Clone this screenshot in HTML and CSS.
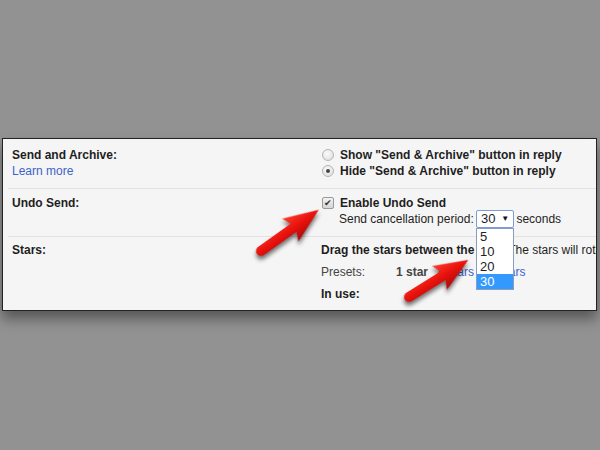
FILE: index.html
```html
<!DOCTYPE html>
<html lang="en">

<head>
    <meta charset="UTF-8">
    <title>General settings - Undo Send</title>
    <link rel="stylesheet" href="styles.css">
</head>

<body>
    <div class="panel">
        <!-- Send and Archive -->
        <div class="row row-archive">
            <div class="label">
                <p><strong>Send and Archive:</strong></p>
                <p><a class="link" href="#">Learn more</a></p>
            </div>
            <div class="value">
                <p class="option"><span class="radio"></span><strong>Show "Send &amp; Archive" button in reply</strong></p>
                <p class="option"><span class="radio on"></span><strong>Hide "Send &amp; Archive" button in reply</strong></p>
            </div>
        </div>

        <!-- Undo Send -->
        <div class="row row-undo">
            <div class="label">
                <p><strong>Undo Send:</strong></p>
            </div>
            <div class="value">
                <p class="option"><span class="check">&#10004;</span><strong>Enable Undo Send</strong></p>
                <p class="period">
                    Send cancellation period:
                    <span class="select">
                        <span class="select-value">30</span><span class="select-arrow">&#9660;</span>
                        <span class="dropdown">
                            <span class="item">5</span>
                            <span class="item">10</span>
                            <span class="item">20</span>
                            <span class="item selected">30</span>
                        </span>
                    </span>
                    seconds
                </p>
            </div>
        </div>

        <!-- Stars -->
        <div class="row row-stars">
            <div class="label">
                <p><strong>Stars:</strong></p>
            </div>
            <div class="value">
                <p class="stars-line"><strong>Drag the stars between the lists.</strong> The stars will rotate in the order shown below when you click successively.</p>
                <p class="stars-line presets">
                    <span class="presets-label">Presets:</span>
                    <strong>1 star</strong>
                    <a class="link" href="#">4 stars</a>
                    <a class="link" href="#">all stars</a>
                </p>
                <p class="stars-line"><strong>In use:</strong></p>
            </div>
        </div>
    </div>

    <!-- setas vermelhas por cima da captura -->
    <svg class="arrows" width="600" height="450" viewBox="0 0 600 450">
        <defs>
            <linearGradient id="red" x1="0" y1="-14" x2="0" y2="14" gradientUnits="userSpaceOnUse">
                <stop offset="0" stop-color="#ff3b2b" />
                <stop offset="0.5" stop-color="#e8120c" />
                <stop offset="1" stop-color="#b0070a" />
            </linearGradient>
        </defs>
        <path class="arrow" transform="translate(261 251) rotate(-35.5)"
            d="M0,-5 L40,-5 L36,-14 L71,0 L36,14 L40,5 L0,5 A5,5 0 0 1 0,-5 Z" />
        <path class="arrow" transform="translate(409 297) rotate(-32)"
            d="M0,-5 L40,-5 L36,-14 L70,0 L36,14 L40,5 L0,5 A5,5 0 0 1 0,-5 Z" />
    </svg>
</body>

</html>
```

FILE: styles.css
```css
body {
    margin: 0;
    background-color: #929292;
    font-family: Arial, "Liberation Sans", sans-serif;
    font-size: 12px;
    color: #1e1e1e;
    position: relative;
    height: 450px;
    overflow: hidden;
}

p {
    margin: 0;
    line-height: 16px;
    white-space: nowrap;
}

.panel {
    margin: 138px 3px 0 2px;
    background-color: #f5f5f5;
    border: 1px solid #222;
    box-shadow: 0 8px 12px rgba(0, 0, 0, 0.4);
    overflow: hidden;
}

.row {
    display: grid;
    grid-template-columns: 313px 1fr;
    margin-left: 5px;
    border-bottom: 1px solid #e2e2e2;
}

.row:last-child {
    border-bottom: none;
}

.label {
    padding-left: 4px;
}

.row-archive {
    padding: 8px 0 9px;
}

.row-undo {
    padding: 6px 0 8px;
}

.row-stars {
    padding: 5px 0 8px;
}

.link {
    color: #3d62c8;
    text-decoration: none;
}

/* Opções com radio / checkbox */
.option {
    display: flex;
    align-items: center;
}

.radio {
    width: 10px;
    height: 10px;
    margin: 0 6px 0 1px;
    border: 1px solid #b4b4b4;
    border-radius: 50%;
    background: radial-gradient(circle at 40% 35%, #fafafa, #dcdcdc);
    position: relative;
}

.radio.on::after {
    content: "";
    position: absolute;
    left: 3px;
    top: 3px;
    width: 4px;
    height: 4px;
    border-radius: 50%;
    background-color: #444;
}

.check {
    width: 10px;
    height: 10px;
    margin: 0 6px 0 1px;
    border: 1px solid #9a9a9a;
    border-radius: 2px;
    background: linear-gradient(#f2f2f2, #d6d6d6);
    font-size: 9px;
    line-height: 10px;
    text-align: center;
    color: #333;
}

/* Período de cancelamento */
.period {
    padding-left: 18px;
    line-height: 18px;
    margin-top: -1px;
}

.select {
    display: inline-flex;
    align-items: center;
    justify-content: space-between;
    box-sizing: border-box;
    width: 38px;
    height: 18px;
    padding: 0 4px;
    margin: 0 -1px 0 -1px;
    vertical-align: top;
    border: 1px solid #7d9ad4;
    border-radius: 2px;
    background-color: #fff;
    position: relative;
    font-size: 13px;
}

.select-arrow {
    font-size: 8px;
    color: #111;
}

.dropdown {
    position: absolute;
    left: -1px;
    top: 17px;
    width: 38px;
    box-sizing: border-box;
    border: 1px solid #8a9cc0;
    background-color: #fff;
    display: flex;
    flex-direction: column;
    z-index: 2;
}

.item {
    height: 15px;
    line-height: 15px;
    padding-left: 3px;
    font-size: 13px;
    color: #222;
}

.item.selected {
    background-color: #3399ff;
    color: #fff;
}

/* Estrelas */
.stars-line {
    margin-bottom: 6px;
}

.stars-line:last-child {
    margin-bottom: 0;
}

.presets {
    display: flex;
    gap: 10px;
    color: #444;
}

.presets-label {
    width: 65px;
}

.arrows {
    position: absolute;
    left: 0;
    top: 0;
    pointer-events: none;
}

.arrow {
    fill: url(#red);
    filter: drop-shadow(-2px 3px 2px rgba(0, 0, 0, 0.55));
}
```
